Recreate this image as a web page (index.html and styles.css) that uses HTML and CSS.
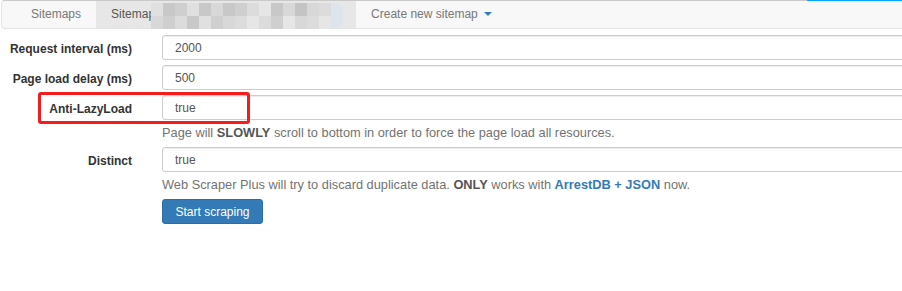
FILE: index.html
```html
<!DOCTYPE html>
<html>
<head>
<meta charset="utf-8">
<link rel="stylesheet" href="styles.css">
</head>
<body>
<div class="progress"></div>
<nav class="navbar">
  <ul class="nav">
    <li class="tab"><a>Sitemaps</a></li>
    <li class="tab active"><a>Sitemap<span class="mosaic"><i class="c1"></i><i class="c3"></i><i class="c2"></i><i class="c1"></i><i class="c3"></i><i class="c4"></i><i class="c3"></i><i class="c2"></i><i class="c5"></i><i class="c6"></i><i class="c3"></i><i class="c4"></i><i class="c7"></i><i class="c4"></i><i class="c5"></i><i class="c8"></i><i class="c4"></i><i class="c2"></i><i class="c5"></i><i class="c3"></i><i class="c1"></i><i class="c2"></i><i class="c4"></i><i class="c5"></i><i class="c6"></i><i class="c5"></i><i class="c2"></i><i class="c6"></i><i class="c4"></i><i class="c5"></i><i class="c6"></i><i class="c8"></i></span></a></li>
    <li class="tab"><a>Create new sitemap<span class="caret"></span></a></li>
  </ul>
</nav>
<form class="form">
  <div class="row">
    <label class="lbl">Request interval (ms)</label>
    <div class="ctl"><input class="input" type="text" value="2000"></div>
  </div>
  <div class="row">
    <label class="lbl">Page load delay (ms)</label>
    <div class="ctl"><input class="input" type="text" value="500"></div>
  </div>
  <div class="row row-help">
    <div class="highlight"></div>
    <label class="lbl">Anti-LazyLoad</label>
    <div class="ctl">
      <input class="input" type="text" value="true">
      <p class="help">Page will <b>SLOWLY</b> scroll to bottom in order to force the page load all resources.</p>
    </div>
  </div>
  <div class="row row-help">
    <label class="lbl">Distinct</label>
    <div class="ctl">
      <input class="input" type="text" value="true">
      <p class="help">Web Scraper Plus will try to discard duplicate data. <b>ONLY</b> works with <b class="link">ArrestDB + JSON</b> now.</p>
    </div>
  </div>
  <div class="row">
    <div class="lbl"></div>
    <div class="ctl"><button type="button" class="btn">Start scraping</button></div>
  </div>
</form>
</body>
</html>
```
FILE: styles.css
```css
html, body {
  margin: 0;
  padding: 0;
  background: #fff;
  overflow: hidden;
}
body {
  font-family: "Liberation Sans", Arial, sans-serif;
  font-size: 12px;
  line-height: 17px;
  color: #333;
  position: relative;
  width: 902px;
  height: 291px;
}
.progress {
  position: absolute;
  left: 807px;
  top: 0;
  width: 95px;
  height: 1px;
  background: #00a6ff;
  z-index: 5;
}
.navbar {
  margin-left: 1px;
  width: 920px;
  height: 27px;
  background: #f8f8f8;
  border: 1px solid #e4e4e4;
  border-top-color: #c9c9c9;
  border-radius: 4px;
  padding-left: 14px;
}
.nav {
  list-style: none;
  margin: 0;
  padding: 0;
  display: flex;
}
.tab a {
  display: block;
  padding: 5px 15px;
  color: #777;
  white-space: nowrap;
  position: relative;
}
.tab.active a {
  background: #e7e7e7;
  color: #555;
  padding-right: 13px;
}
.mosaic {
  display: inline-grid;
  grid-template-columns: repeat(16, 12px);
  grid-template-rows: 13px 13px;
  margin-left: -4px;
  vertical-align: top;
  margin-top: -3px;
  margin-bottom: -6px;
  border-radius: 0 8px 10px 0;
  overflow: hidden;
}
.mosaic i { display: block; }
.c1 { background: #e0e0e0; }
.c2 { background: #cfcfcf; }
.c3 { background: #c8c8c8; }
.c4 { background: #d8d8d8; }
.c5 { background: #dcdcdc; }
.c6 { background: #e6e6e6; }
.c7 { background: #c4c4c4; }
.c8 { background: #dde4ec; }
.caret {
  display: inline-block;
  width: 0;
  height: 0;
  margin-left: 6px;
  vertical-align: middle;
  border-top: 4px solid #337ab7;
  border-left: 4px solid transparent;
  border-right: 4px solid transparent;
  position: relative;
  top: -1px;
}
.form {
  margin: 6px 0 0;
}
.row {
  display: flex;
  margin-bottom: 5px;
  position: relative;
}
.row-help { margin-bottom: 6px; }
.lbl {
  flex: 0 0 132px;
  padding-right: 15px;
  padding-top: 6px;
  text-align: right;
  font-weight: bold;
  color: #333;
}
.ctl {
  flex: 0 0 760px;
  padding-left: 15px;
}
.input {
  display: block;
  box-sizing: border-box;
  width: 100%;
  height: 25px;
  margin: 0;
  padding: 0 12px;
  font-family: inherit;
  font-size: 12px;
  color: #555;
  background: #fff;
  border: 1px solid #ccc;
  border-radius: 3px;
  box-shadow: inset 0 1px 1px rgba(0,0,0,.075);
  outline: none;
}
.help {
  margin: 4px 0 0;
  font-size: 12.8px;
  color: #737373;
}
.help b { color: #555; }
.help .link { color: #337ab7; }
.highlight {
  position: absolute;
  left: 38px;
  top: -3px;
  width: 212px;
  height: 32px;
  box-sizing: border-box;
  border: 3px solid #f41c1c;
  border-radius: 3px;
}
.btn {
  display: block;
  box-sizing: border-box;
  width: 101px;
  height: 25px;
  padding: 0;
  font-family: inherit;
  font-size: 12px;
  color: #fff;
  background: #337ab7;
  border: 1px solid #2e6da4;
  border-radius: 3px;
}
```
